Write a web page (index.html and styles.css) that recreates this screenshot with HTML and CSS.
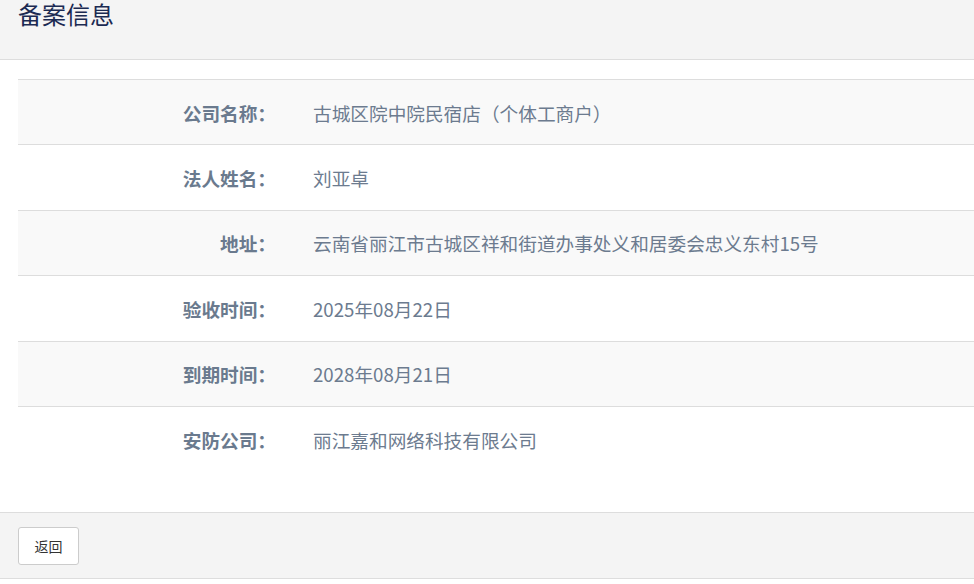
FILE: index.html
```html
<!DOCTYPE html>
<html lang="zh-CN">
<head>
<meta charset="utf-8">
<title>备案信息</title>
<link rel="stylesheet" href="styles.css">
</head>
<body>
<div class="panel">
  <div class="panel-heading">
    <h3 class="panel-title">备案信息</h3>
  </div>
  <div class="panel-body">
    <div class="info-table">
      <div class="row striped"><div class="label">公司名称：</div><div class="value">古城区院中院民宿店（个体工商户）</div></div>
      <div class="row"><div class="label">法人姓名：</div><div class="value">刘亚卓</div></div>
      <div class="row striped"><div class="label">地址：</div><div class="value">云南省丽江市古城区祥和街道办事处义和居委会忠义东村15号</div></div>
      <div class="row"><div class="label">验收时间：</div><div class="value">2025年08月22日</div></div>
      <div class="row striped"><div class="label">到期时间：</div><div class="value">2028年08月21日</div></div>
      <div class="row"><div class="label">安防公司：</div><div class="value">丽江嘉和网络科技有限公司</div></div>
    </div>
  </div>
  <div class="panel-footer">
    <button class="btn" type="button">返回</button>
  </div>
</div>
</body>
</html>
```
FILE: styles.css
```css
html, body {
  margin: 0;
  padding: 0;
  background: #fff;
  font-family: "Microsoft YaHei", "Noto Sans CJK SC", "Noto Sans", sans-serif;
}
.panel {
  width: 974px;
}
.panel-heading {
  height: 59px;
  box-sizing: border-box;
  background: #f4f4f4;
  border-bottom: 1px solid #dddddd;
  padding: 1px 18px 0;
  height: 60px;
}
.panel-title {
  margin: 0;
  font-size: 24px;
  line-height: 25px;
  font-weight: normal;
  color: #1b2a52;
}
.panel-body {
  padding: 19px 0 41px 18px;
}
.info-table {
  display: flex;
  flex-direction: column;
}
.row {
  display: grid;
  grid-template-columns: 258px 1fr;
  column-gap: 37px;
  align-items: center;
  height: 65.4px;
  box-sizing: border-box;
  border-top: 1px solid #dddddd;
  font-size: 18.67px;
}
.row.striped {
  background: #f9f9f9;
}
.label {
  text-align: right;
  font-weight: bold;
  color: #6a7a8e;
}
.value {
  color: #6c7b8f;
}
.panel-footer {
  background: #f4f4f4;
  border-top: 1px solid #dddddd;
  border-bottom: 1px solid #dddddd;
  padding: 14px 18px 13px;
}
.btn {
  display: block;
  width: 61px;
  height: 38px;
  background: #fff;
  border: 1px solid #cccccc;
  border-radius: 3px;
  font-family: "Microsoft YaHei", "Noto Sans CJK SC", sans-serif;
  font-size: 14px;
  color: #333;
  padding: 0;
}
```
